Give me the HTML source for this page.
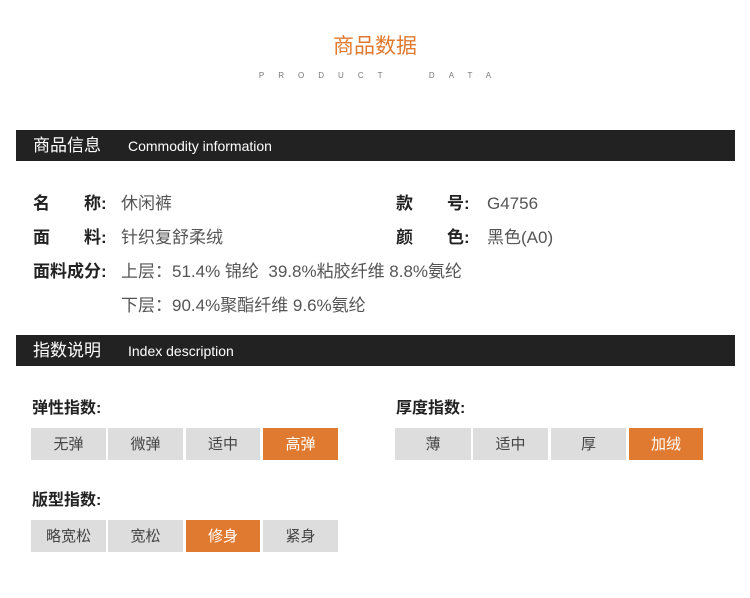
<!DOCTYPE html>
<html><head><meta charset="utf-8"><style>
*{margin:0;padding:0;box-sizing:border-box}
body{width:750px;height:598px;background:#fff;position:relative;overflow:hidden;font-family:"Liberation Sans","Noto Sans CJK SC",sans-serif;color:#333}
.a{position:absolute;white-space:nowrap;line-height:1}
.title{left:0;width:750px;text-align:center;top:36px;font-size:21px;color:#e07a30}
.sub{left:0;width:750px;text-align:center;top:72px;font-size:8px;color:#777;letter-spacing:14px;padding-left:14px}
.bar{left:16px;width:719px;height:31px;background:#222;color:#fff}
.bar b{position:absolute;left:17px;top:7px;font-size:17px;font-weight:normal;line-height:1}
.bar i{position:absolute;left:112px;top:9px;font-size:14px;font-style:normal;line-height:1}
.k{font-size:17px;color:#222;font-weight:bold}
.v{font-size:17px;color:#555}
.lab{font-size:16px;color:#222;font-weight:bold}
.btn{position:absolute;height:32px;background:#ddd;color:#444;font-size:15px;text-align:center;line-height:34px}
.on{background:#e07a30;color:#fff}
</style></head><body>
<div class="a title">商品数据</div>
<div class="a sub">PRODUCT&nbsp;&nbsp;DATA</div>
<div class="a bar" style="top:130px"><b>商品信息</b><i>Commodity information</i></div>
<div class="a k" style="left:33px;top:195px">名</div><div class="a k" style="left:84px;top:195px">称:</div><div class="a v" style="left:121px;top:195px">休闲裤</div>
<div class="a k" style="left:396px;top:195px">款</div><div class="a k" style="left:447px;top:195px">号:</div><div class="a v" style="left:487px;top:195px">G4756</div>
<div class="a k" style="left:33px;top:229px">面</div><div class="a k" style="left:84px;top:229px">料:</div><div class="a v" style="left:121px;top:229px">针织复舒柔绒</div>
<div class="a k" style="left:396px;top:229px">颜</div><div class="a k" style="left:447px;top:229px">色:</div><div class="a v" style="left:487px;top:229px">黑色(A0)</div>
<div class="a k" style="left:33px;top:263px">面料成分:</div><div class="a v" style="left:121px;top:263px">上层：51.4% 锦纶&nbsp; 39.8%粘胶纤维 8.8%氨纶</div>
<div class="a v" style="left:121px;top:297px">下层：90.4%聚酯纤维 9.6%氨纶</div>
<div class="a bar" style="top:335px"><b>指数说明</b><i>Index description</i></div>
<div class="a lab" style="left:32px;top:401px">弹性指数:</div>
<div class="a lab" style="left:396px;top:401px">厚度指数:</div>
<div class="a lab" style="left:32px;top:493px">版型指数:</div>
<div class="btn" style="left:31px;top:428px;width:75px">无弹</div>
<div class="btn" style="left:108px;top:428px;width:75px">微弹</div>
<div class="btn" style="left:186px;top:428px;width:74px">适中</div>
<div class="btn on" style="left:263px;top:428px;width:75px">高弹</div>
<div class="btn" style="left:395px;top:428px;width:76px">薄</div>
<div class="btn" style="left:473px;top:428px;width:75px">适中</div>
<div class="btn" style="left:551px;top:428px;width:75px">厚</div>
<div class="btn on" style="left:629px;top:428px;width:74px">加绒</div>
<div class="btn" style="left:31px;top:520px;width:75px">略宽松</div>
<div class="btn" style="left:108px;top:520px;width:75px">宽松</div>
<div class="btn on" style="left:186px;top:520px;width:74px">修身</div>
<div class="btn" style="left:263px;top:520px;width:75px">紧身</div>
</body></html>
